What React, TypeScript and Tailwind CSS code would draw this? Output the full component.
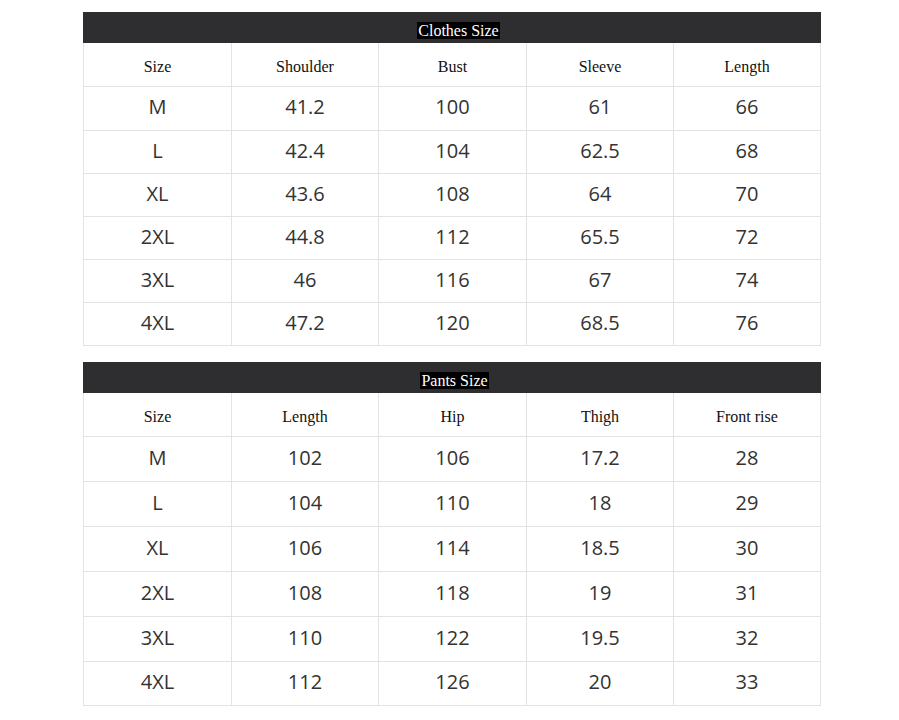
import React from 'react';

const clothes = {
  title: 'Clothes Size',
  shift: 'pl-[13px]',
  head: ['Size', 'Shoulder', 'Bust', 'Sleeve', 'Length'],
  rows: [
    ['M', '41.2', '100', '61', '66'],
    ['L', '42.4', '104', '62.5', '68'],
    ['XL', '43.6', '108', '64', '70'],
    ['2XL', '44.8', '112', '65.5', '72'],
    ['3XL', '46', '116', '67', '74'],
    ['4XL', '47.2', '120', '68.5', '76'],
  ],
  rowH: ['h-[44px]', 'h-[43px]', 'h-[43px]', 'h-[43px]', 'h-[43px]', 'h-[43px]'],
};

const pants = {
  title: 'Pants Size',
  shift: 'pl-[5px]',
  head: ['Size', 'Length', 'Hip', 'Thigh', 'Front rise'],
  rows: [
    ['M', '102', '106', '17.2', '28'],
    ['L', '104', '110', '18', '29'],
    ['XL', '106', '114', '18.5', '30'],
    ['2XL', '108', '118', '19', '31'],
    ['3XL', '110', '122', '19.5', '32'],
    ['4XL', '112', '126', '20', '33'],
  ],
  rowH: ['h-[45px]', 'h-[45px]', 'h-[45px]', 'h-[45px]', 'h-[45px]', 'h-[44px]'],
};

const cols = 'grid grid-cols-[148px_147px_148px_147px_147px]';

const SizeTable = ({ data }: { data: typeof clothes }) => (
  <div className="w-[738px]">
    {/* title bar */}
    <div className={`h-[31px] bg-[#2e2d30] flex items-center justify-center pt-[5px] ${data.shift}`}>
      <span className="bg-black text-white px-[1px] leading-[17px] text-[16px] font-['Liberation_Serif',serif]">
        {data.title}
      </span>
    </div>
    <div className="border-l border-[#e3e3e3]">
      <div className={cols}>
        {data.head.map((h, i) => (
          <div
            key={i}
            className="h-[44px] pt-[4px] border-r border-b border-[#e3e3e3] flex items-center justify-center text-[16px] text-[#111] font-['Liberation_Serif',serif]"
          >
            {h}
          </div>
        ))}
      </div>
      {data.rows.map((r, ri) => (
        <div key={ri} className={cols}>
          {r.map((v, i) => (
            <div
              key={i}
              className={`${data.rowH[ri]} pb-[3px] border-r border-b border-[#e3e3e3] flex items-center justify-center text-[20px] text-[#333] font-['Open_Sans',sans-serif]`}
            >
              {v}
            </div>
          ))}
        </div>
      ))}
    </div>
  </div>
);

export default function App() {
  return (
    <div className="w-[899px] h-[720px] bg-white pl-[83px] pt-[12px] flex flex-col gap-[16px] overflow-hidden">
      <SizeTable data={clothes} />
      <SizeTable data={pants} />
    </div>
  );
}
